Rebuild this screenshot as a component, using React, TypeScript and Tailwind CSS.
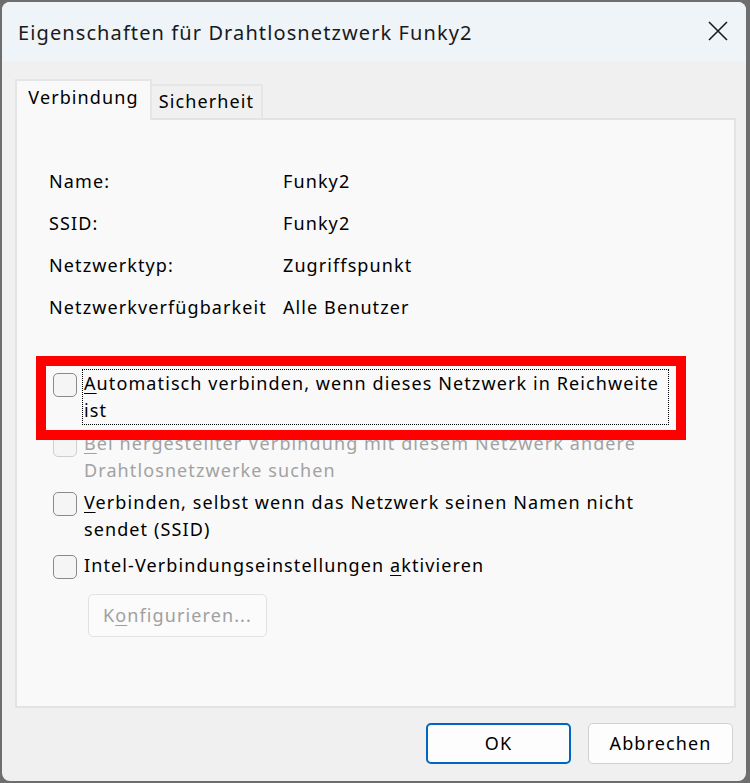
import React from 'react';

const font = { fontFamily: '"Noto Sans", "Segoe UI", sans-serif' };

function Box({ disabled = false }: { disabled?: boolean }) {
  return (
    <span
      className={`mt-[3px] h-[24px] w-[24px] shrink-0 rounded-[5px] border-[1.5px] bg-[#f5f5f5] ${
        disabled ? 'border-[#cfcfcf]' : 'border-[#8a8a8a]'
      }`}
    />
  );
}

function Check({
  children,
  disabled = false,
  focused = false,
  className = '',
}: {
  children: React.ReactNode;
  disabled?: boolean;
  focused?: boolean;
  className?: string;
}) {
  return (
    <div className={`flex items-start gap-[6px] ${className}`}>
      <Box disabled={disabled} />
      <div
        className={`w-[587px] pl-[1px] leading-[27px] ${
          focused ? 'border border-dotted border-black -mt-px -ml-px' : ''
        } ${disabled ? 'text-[#a2a2a2]' : 'text-black'}`}
      >
        {children}
      </div>
    </div>
  );
}

export default function App() {
  const rows: [string, string][] = [
    ['Name:', 'Funky2'],
    ['SSID:', 'Funky2'],
    ['Netzwerktyp:', 'Zugriffspunkt'],
    ['Netzwerkverfügbarkeit', 'Alle Benutzer'],
  ];

  return (
    <div
      className="h-[783px] w-[750px] bg-[#6e6e6e] pt-[2px] pl-[2px] pr-[4px] pb-[2px] tracking-[1.1px]"
      style={font}
    >
      <div className="flex h-full flex-col overflow-hidden rounded-lg bg-[#f0f0f0]">
        {/* Title bar */}
        <div className="flex h-[60px] shrink-0 items-center justify-between bg-[#eff4f9] pl-[16px] pr-[18px]">
          <span className="mt-[1px] text-[20px] text-[#1a1a1a]">Eigenschaften für Drahtlosnetzwerk Funky2</span>
          <svg width="20" height="20" viewBox="0 0 20 20" className="mt-[-2px]">
            <path d="M1 1 L19 19 M19 1 L1 19" stroke="#1a1a1a" strokeWidth="1.6" />
          </svg>
        </div>

        {/* Body */}
        <div className="flex flex-1 flex-col pl-[13px] pr-[10px] pt-[15px]">
          {/* Tabs */}
          <div className="relative z-10 flex h-[41px] items-end text-[18px]">
            <div className="-mb-[2px] flex h-[41px] w-[137px] items-center justify-center border-2 border-b-0 border-[#e5e5e5] bg-[#f9f9f9] pb-[6px] text-black">
              Verbindung
            </div>
            <div className="flex h-[34px] w-[111px] items-center justify-center border-2 border-l-0 border-b-0 border-[#e6e6e6] bg-[#f0f0f0] pb-[1px] text-black">
              Sicherheit
            </div>
          </div>

          {/* Panel */}
          <div className="relative h-[590px] border-2 border-[#e3e3e3] bg-[#f9f9f9] pl-[32px] pt-[40px] text-[18px]">
            <div className="grid grid-cols-[234px_1fr]">
              {rows.map(([k, v]) => (
                <React.Fragment key={k}>
                  <div className="flex h-[42px] items-center text-black">{k}</div>
                  <div className="flex h-[42px] items-center text-black">{v}</div>
                </React.Fragment>
              ))}
            </div>

            <div className="mt-[42px] flex flex-col pl-[4px]">
              <Check focused>
                <span className="underline underline-offset-[3px] decoration-1">A</span>
                utomatisch verbinden, wenn dieses Netzwerk in Reichweite
                <br />
                ist
              </Check>
              <Check disabled className="mt-[5px]">
                <span className="underline underline-offset-[3px] decoration-1">B</span>
                ei hergestellter Verbindung mit diesem Netzwerk andere
                <br />
                Drahtlosnetzwerke suchen
              </Check>
              <Check className="mt-[5px]">
                <span className="underline underline-offset-[3px] decoration-1">V</span>
                erbinden, selbst wenn das Netzwerk seinen Namen nicht
                <br />
                sendet (SSID)
              </Check>
              <Check className="mt-[9px]">
                Intel-Verbindungseinstellungen{' '}
                <span className="underline underline-offset-[3px] decoration-1">a</span>
                ktivieren
              </Check>

              <div className="ml-[35px] mt-[15px] flex h-[43px] w-[179px] items-center justify-center rounded-[5px] border border-[#e2e2e2] bg-[#fbfbfb] text-[#a0a0a0]">
                K<span className="underline underline-offset-[3px] decoration-1">o</span>nfigurieren...
              </div>
            </div>

            {/* annotation */}
            <div className="absolute left-[19px] top-[236px] h-[84px] w-[650px] border-[10px] border-[#ff0000]" />
          </div>

          {/* Footer */}
          <div className="flex flex-1 items-center justify-end gap-[17px] pr-[3px] pb-[2px] text-[18px]">
            <button className="flex h-[41px] w-[145px] items-center justify-center rounded-[5px] border-2 border-[#0067c0] bg-[#fdfdfd] text-black">
              OK
            </button>
            <button className="flex h-[41px] w-[145px] items-center justify-center rounded-[5px] border border-[#d0d0d0] bg-[#fdfdfd] text-black">
              Abbrechen
            </button>
          </div>
        </div>
      </div>
    </div>
  );
}
